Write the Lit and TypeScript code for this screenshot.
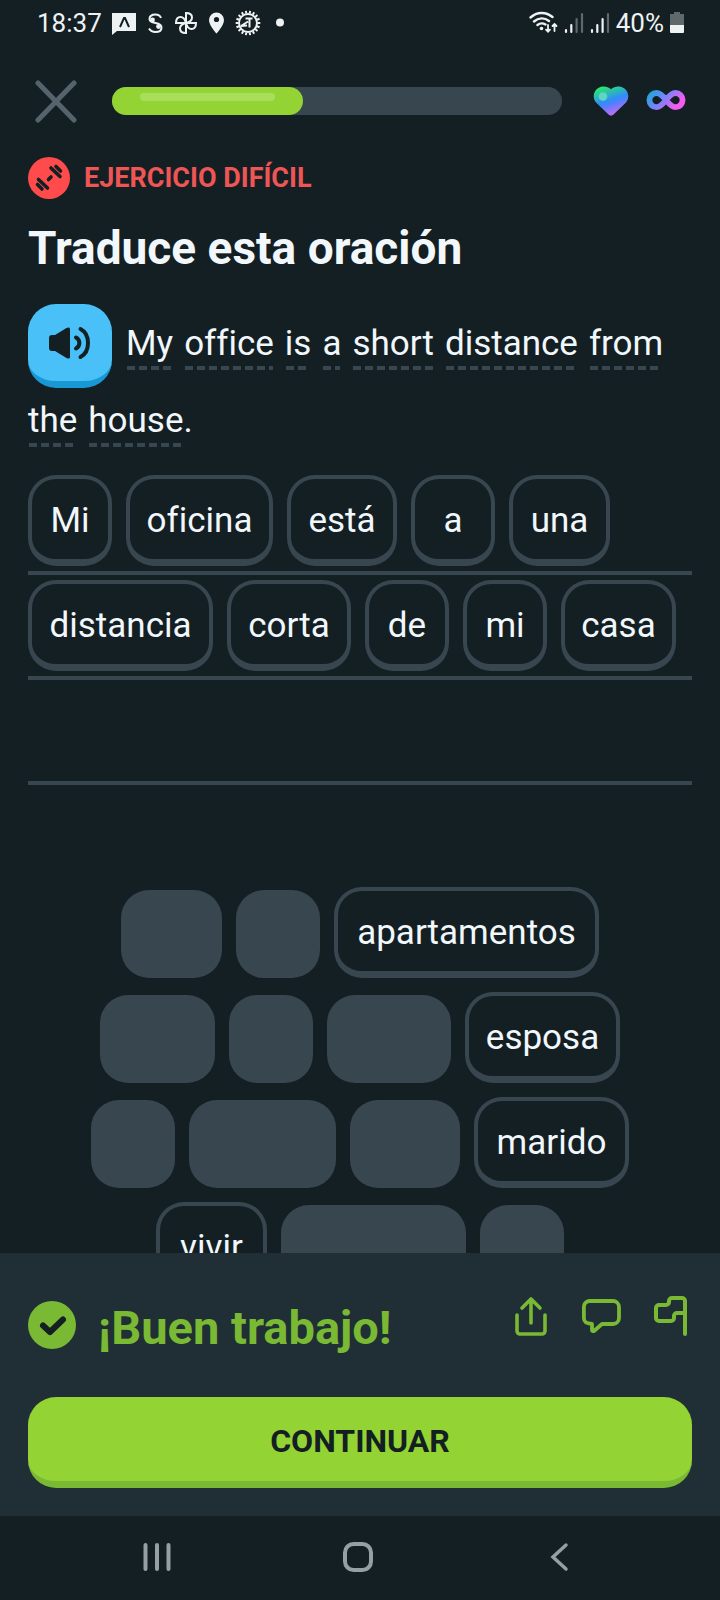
import { LitElement, html, css, svg } from "lit";
import { customElement, property } from "lit/decorators.js";

interface Word {
  text: string;
  width: number;
  used?: boolean;
}

const answerRows: Word[][] = [
  [
    { text: "Mi", width: 84 },
    { text: "oficina", width: 147 },
    { text: "está", width: 110 },
    { text: "a", width: 84 },
    { text: "una", width: 101 },
  ],
  [
    { text: "distancia", width: 185 },
    { text: "corta", width: 124 },
    { text: "de", width: 84 },
    { text: "mi", width: 84 },
    { text: "casa", width: 115 },
  ],
  [],
];

const bankRows: Word[][] = [
  [
    { text: "una", width: 101, used: true },
    { text: "a", width: 84, used: true },
    { text: "apartamentos", width: 265 },
  ],
  [
    { text: "casa", width: 115, used: true },
    { text: "de", width: 84, used: true },
    { text: "corta", width: 124, used: true },
    { text: "esposa", width: 155 },
  ],
  [
    { text: "mi", width: 84, used: true },
    { text: "oficina", width: 147, used: true },
    { text: "está", width: 110, used: true },
    { text: "marido", width: 155 },
  ],
  [
    { text: "vivir", width: 111 },
    { text: "distancia", width: 185, used: true },
    { text: "Mi", width: 84, used: true },
  ],
];

const sentence = ["My", "office", "is", "a", "short", "distance", "from", "the", "house"];

@customElement("word-chip")
export class WordChip extends LitElement {
  @property() text = "";
  @property({ type: Boolean }) used = false;

  static styles = css`
    :host {
      display: block;
    }
    .chip,
    .slot {
      box-sizing: border-box;
      width: 100%;
      border-radius: 28px;
    }
    .chip {
      display: block;
      height: 91px;
      margin: 0;
      padding: 4px 0 0;
      border: 4px solid #38464f;
      border-bottom-width: 7px;
      background: #141f23;
      color: #f1f7fb;
      font: 400 35px/42px Roboto, sans-serif;
      font-variant-ligatures: none;
      text-align: center;
      white-space: nowrap;
      cursor: pointer;
    }
    .slot {
      height: 88px;
      background: #38464f;
    }
  `;

  render() {
    return this.used
      ? html`<div class="slot"></div>`
      : html`<button class="chip" type="button">${this.text}</button>`;
  }
}

@customElement("status-bar")
export class StatusBar extends LitElement {
  static styles = css`
    :host {
      display: flex;
      justify-content: space-between;
      align-items: center;
      height: 46px;
      padding: 0 36px 0 37px;
      color: #eef2f3;
      font: 400 26px/30px Roboto, sans-serif;
    }
    .group {
      display: flex;
      align-items: center;
    }
    .left {
      gap: 10px;
    }
    .right {
      gap: 6px;
    }
    svg {
      display: block;
    }
  `;

  private teeth() {
    return Array.from({ length: 18 }, (_, i) => {
      const a = (i * Math.PI) / 9;
      const x = Math.cos(a);
      const y = Math.sin(a);
      return svg`<path d="M${13 + 9.5 * x} ${13 + 9.5 * y}L${13 + 12.3 * x} ${13 + 12.3 * y}"/>`;
    });
  }

  render() {
    return html`
      <div class="group left">
        <span>18:37</span>
        <svg width="24" height="26" viewBox="0 0 24 26">
          <path d="M0 3h24v18H5l-5 4z" fill="#eef2f3" />
          <path d="M8 17l4-9h1l4 9" fill="none" stroke="#141f23" stroke-width="2" />
        </svg>
        <svg width="18" height="26" viewBox="0 0 18 26" fill="none" stroke="#eef2f3">
          <path
            d="M15 8C14 5.500 12 4.500 9.500 4.500C6 4.500 3.500 6 3.500 9C3.500 12 6.500 12.500 9.500 13C13 13.600 15.500 14.500 15.500 17.500C15.500 20.500 13 22 9.500 22C6.500 22 4.500 21 3 18.500"
            stroke-width="2"
          />
          <circle cx="6.500" cy="10" r="2.400" fill="#eef2f3" stroke="none" />
          <circle cx="12.500" cy="16.500" r="2.400" fill="#eef2f3" stroke="none" />
        </svg>
        <svg width="24" height="26" viewBox="0 0 24 26" fill="none" stroke="#eef2f3" stroke-width="2">
          <path d="M12 13V3c4 0 6 2 6 4.500S16 12 12 13z" />
          <path d="M12 13h10c0 4-2 6-4.500 6S13 17 12 13z" />
          <path d="M12 13v10c-4 0-6-2-6-4.500S8 14 12 13z" />
          <path d="M12 13H2c0-4 2-6 4.500-6S11 9 12 13z" />
        </svg>
        <svg width="17" height="26" viewBox="0 0 17 26">
          <path
            d="M8.500 2.500a7.500 7.500 0 0 0-7.500 7.500c0 5.500 7.500 13.500 7.500 13.500S16 15.500 16 10a7.500 7.500 0 0 0-7.500-7.500z"
            fill="#eef2f3"
          />
          <circle cx="8.500" cy="9.500" r="2.600" fill="#141f23" />
        </svg>
        <svg width="26" height="26" viewBox="0 0 26 26" fill="none" stroke="#eef2f3" stroke-width="2">
          <circle cx="13" cy="13" r="9" />
          ${this.teeth()}
          <path d="M10.500 8.500h7M14.500 8.500v9M13 11.500l-7 4.500 6-.5" />
        </svg>
        <svg width="26" height="26" viewBox="0 0 26 26">
          <circle cx="9" cy="12.500" r="4" fill="#eef2f3" />
        </svg>
      </div>
      <div class="group right">
        <svg width="29" height="26" viewBox="0 0 29 26" fill="none" stroke="#eef2f3" stroke-linecap="round">
          <path d="M1.500 7.500C8 1.500 17 1.500 23.500 7M5 11.500c4.500-4 10.500-4.200 15-.5M8.500 15c2.500-2 5.500-2 8-.5" stroke-width="2.400" />
          <circle cx="12.500" cy="18.500" r="1.800" fill="#eef2f3" stroke="none" />
          <path d="M19 15v6.500M17 19.700l2 2 2-2M25.500 21v-6.500M23.500 16l2-2 2 2" stroke-width="1.800" />
        </svg>
        <svg width="20" height="26" viewBox="0 0 20 26" fill="none" stroke="#eef2f3" stroke-width="2.200" stroke-linecap="round">
          <path d="M2 20v2M7.300 15v7" />
          <path d="M12.600 9v13M18 4v18" stroke="#5f696c" />
        </svg>
        <svg width="20" height="26" viewBox="0 0 20 26" fill="none" stroke="#eef2f3" stroke-width="2.200" stroke-linecap="round">
          <path d="M2 20v2M7.300 15v7M12.600 9v13" />
          <path d="M18 4v18" stroke="#5f696c" />
        </svg>
        <span>40%</span>
        <svg width="14" height="26" viewBox="0 0 14 26">
          <path d="M4 2h6v2h4v11H0V4h4z" fill="#5f696c" />
          <path d="M0 15h14v7a1 1 0 0 1-1 1H1a1 1 0 0 1-1-1z" fill="#eef2f3" />
        </svg>
      </div>
    `;
  }
}

@customElement("app-root")
export class AppRoot extends LitElement {
  @property({ type: Number }) progress = 42.5;

  static styles = css`
    :host {
      display: flex;
      flex-direction: column;
      height: 100vh;
      overflow: hidden;
      background: #141f23;
      color: #f1f7fb;
      font-family: Roboto, sans-serif;
      font-variant-ligatures: none;
    }
    svg {
      display: block;
    }
    button {
      margin: 0;
      padding: 0;
      border: 0;
      background: none;
      font-family: inherit;
      color: inherit;
      cursor: pointer;
    }
    h1,
    h2,
    p {
      margin: 0;
    }
    .top {
      display: flex;
      align-items: center;
      flex: none;
      height: 110px;
      padding: 0 34px;
    }
    .track {
      flex: 1;
      height: 28px;
      margin: 0 30px 0 34px;
      border-radius: 14px;
      background: #38464f;
    }
    .fill {
      box-sizing: border-box;
      height: 100%;
      padding: 6px 28px;
      border-radius: 14px;
      background: #93d333;
    }
    .shine {
      height: 8px;
      border-radius: 4px;
      background: #a8de5c;
    }
    .perks {
      display: flex;
      align-items: center;
      gap: 17px;
    }
    main {
      flex: 1;
      min-height: 0;
      overflow: hidden;
      padding: 1px 28px 0;
    }
    .tag {
      display: flex;
      align-items: center;
      gap: 14px;
      color: #ee5555;
      font-size: 27px;
      line-height: 42px;
      font-weight: 700;
    }
    h1 {
      margin-top: 22px;
      font-size: 46px;
      line-height: 54px;
      font-weight: 700;
    }
    .sentence {
      display: flex;
      flex-wrap: wrap;
      align-items: center;
      gap: 11px;
      margin-top: 29px;
      font-size: 35px;
      line-height: 44px;
    }
    .speak {
      display: flex;
      align-items: center;
      justify-content: center;
      box-sizing: border-box;
      width: 84px;
      height: 84px;
      margin-right: 3px;
      border-bottom: 7px solid #1899d6;
      border-radius: 28px;
      background: #49c0f8;
    }
    .word {
      display: flex;
    }
    .hint::after {
      content: "";
      display: block;
      height: 4px;
      margin: 0 1px;
      background: repeating-linear-gradient(90deg, #38464f 0 8px, transparent 8px 12px);
    }
    .answer {
      margin-top: 28px;
    }
    .line {
      display: flex;
      gap: 14px;
      height: 96px;
      margin-bottom: 5px;
      border-bottom: 4px solid #38464f;
    }
    .bank {
      display: flex;
      flex-direction: column;
      gap: 14px;
      margin-top: 102px;
    }
    .row {
      display: flex;
      justify-content: center;
      align-items: flex-end;
      gap: 14px;
    }
    footer {
      flex: none;
      padding: 43px 28px 28px;
      background: #202f36;
    }
    .result {
      display: flex;
      justify-content: space-between;
      align-items: flex-start;
    }
    .praise {
      display: flex;
      gap: 22px;
      padding-top: 5px;
      color: #79b933;
    }
    h2 {
      font-size: 47px;
      line-height: 54px;
      font-weight: 700;
    }
    .actions {
      display: flex;
      gap: 30px;
    }
    .continue {
      box-sizing: border-box;
      display: block;
      width: 100%;
      height: 91px;
      margin-top: 42px;
      padding-top: 3px;
      border-bottom: 7px solid #79b933;
      border-radius: 28px;
      background: #93d333;
      color: #141f23;
      font-size: 32px;
      line-height: 42px;
      font-weight: 700;
    }
    nav {
      display: grid;
      grid-template-columns: repeat(3, 1fr);
      flex: none;
      height: 84px;
      padding: 0 60px 2px 56px;
      box-sizing: border-box;
    }
    nav button {
      display: flex;
      align-items: center;
      justify-content: center;
    }
  `;

  private chips(words: Word[]) {
    return words.map(
      (w) => html`<word-chip style="width:${w.width}px" .text=${w.text} .used=${!!w.used}></word-chip>`
    );
  }

  private header() {
    return html`
      <div class="top">
        <button type="button" aria-label="Cerrar">
          <svg width="44" height="44" viewBox="0 0 44 44" fill="none" stroke="#55646c" stroke-width="5" stroke-linecap="round">
            <path d="M4 4l36 37M40 4L4 41" />
          </svg>
        </button>
        <div class="track" role="progressbar" aria-valuenow=${this.progress} aria-valuemin="0" aria-valuemax="100">
          <div class="fill" style="width:${this.progress}%"><div class="shine"></div></div>
        </div>
        <div class="perks">
          <svg width="37" height="30" viewBox="0 0 37 30">
            <defs>
              <linearGradient id="heart" x1="0.200" y1="0" x2="0.600" y2="1">
                <stop offset="0.050" stop-color="#28e66e" />
                <stop offset="0.500" stop-color="#2f8dfb" />
                <stop offset="0.650" stop-color="#5b7dfb" />
                <stop offset="1" stop-color="#d06bf5" />
              </linearGradient>
            </defs>
            <path
              d="M19 3.200C22 .3 26 0 29 .8C36 3 38.500 11 34 16.500L21.500 28.500C20 30 18 30 16.500 28.500L4 16.500C-.5 11 2 3 9 .8C12 0 16 .3 19 3.200z"
              fill="url(#heart)"
            />
            <circle cx="11" cy="10.500" r="4.300" fill="#5fd6c0" />
          </svg>
          <svg width="40" height="30" viewBox="0 0 40 30">
            <defs>
              <linearGradient id="loop" x1="0" y1="0" x2="1" y2="0.400">
                <stop offset="0" stop-color="#1fa6d8" />
                <stop offset="0.450" stop-color="#6f86fb" />
                <stop offset="1" stop-color="#f25cf0" />
              </linearGradient>
            </defs>
            <path
              d="M20 14C16.500 9.500 14 7 10.500 7a7 7 0 0 0 0 14.200C14 21.200 16.500 18.500 20 14C23.500 9.500 26 7 29.500 7a7 7 0 0 1 0 14.200C26 21.200 23.500 18.500 20 14z"
              fill="none"
              stroke="url(#loop)"
              stroke-width="5.800"
            />
          </svg>
        </div>
      </div>
    `;
  }

  render() {
    return html`
      <status-bar></status-bar>
      ${this.header()}
      <main>
        <div class="tag">
          <svg width="42" height="42" viewBox="0 0 42 42">
            <circle cx="21" cy="21" r="21" fill="#ff4b4b" />
            <g fill="none" stroke="#141f23" stroke-width="3.600" stroke-linecap="round">
              <path d="M23 11l9 8.500M28 9.500l4.500 4.500M10.500 22.500l9 8.500M9.500 27.500l4.500 4.500M20.500 22.500l2.500-2.500" />
            </g>
          </svg>
          <span>EJERCICIO DIFÍCIL</span>
        </div>
        <h1>Traduce esta oración</h1>
        <div class="sentence">
          <button class="speak" type="button" aria-label="Escuchar">
            <svg width="42" height="34" viewBox="0 0 42 34">
              <path d="M0 12a3 3 0 0 1 3-3h3L17.500 2c2-1.200 3.500-.5 3.500 1v28c0 1.500-1.500 2.200-3.500 1L6 25H3a3 3 0 0 1-3-3z" fill="#141f23" />
              <path d="M27 11.500c4.500 2.500 4.500 8.500 0 11M31.500 3c10 5.200 10 22.800 0 28" fill="none" stroke="#141f23" stroke-width="4" stroke-linecap="round" />
            </svg>
          </button>
          ${sentence.map(
            (w, i) => html`<span class="word"><span class="hint">${w}</span>${i === sentence.length - 1 ? "." : ""}</span>`
          )}
        </div>
        <div class="answer">
          ${answerRows.map((r) => html`<div class="line">${this.chips(r)}</div>`)}
        </div>
        <div class="bank">
          ${bankRows.map((r) => html`<div class="row">${this.chips(r)}</div>`)}
        </div>
      </main>
      <footer>
        <div class="result">
          <div class="praise">
            <svg width="48" height="48" viewBox="0 0 48 48">
              <circle cx="24" cy="24" r="24" fill="#79b933" />
              <path d="M15 24.500l7 6.500 13-12.500" fill="none" stroke="#141f23" stroke-width="6" stroke-linecap="round" stroke-linejoin="round" />
            </svg>
            <h2>¡Buen trabajo!</h2>
          </div>
          <div class="actions">
            <button type="button" aria-label="Compartir">
              <svg width="40" height="42" viewBox="0 0 40 42" fill="none" stroke="#79b933" stroke-width="3.600" stroke-linecap="round" stroke-linejoin="round">
                <path d="M5 19v16a3 3 0 0 0 3 3h22a3 3 0 0 0 3-3V19M19 27V4M10 12l9-9 9 9" />
              </svg>
            </button>
            <button type="button" aria-label="Comentar">
              <svg width="40" height="42" viewBox="0 0 40 42" fill="none" stroke="#79b933" stroke-width="3.800" stroke-linecap="round" stroke-linejoin="round">
                <path d="M7 5h24a6 6 0 0 1 6 6v11a6 6 0 0 1-6 6H20l-8 7c-1 .5-2 0-2-1v-6C4 27.500 1.900 26 1.900 22V11A6 6 0 0 1 7 5z" />
              </svg>
            </button>
            <button type="button" aria-label="Reportar">
              <svg width="40" height="42" viewBox="0 0 40 42" fill="none" stroke="#79b933" stroke-width="4" stroke-linecap="round" stroke-linejoin="round">
                <path d="M33 38V5a3 3 0 0 0-3-3H20a3 3 0 0 0-3 3v1a3 3 0 0 1-3 3H7a3 3 0 0 0-3 3v10a3 3 0 0 0 3 3h12a3 3 0 0 0 3-3v-2a3 3 0 0 1 3-3h8" />
              </svg>
            </button>
          </div>
        </div>
        <button class="continue" type="button">CONTINUAR</button>
      </footer>
      <nav>
        <button type="button" aria-label="Recientes">
          <svg width="30" height="30" viewBox="0 0 30 30" fill="none" stroke="#969fa2" stroke-width="4" stroke-linecap="round">
            <path d="M3.500 3v24M15 3v24M26.500 3v24" />
          </svg>
        </button>
        <button type="button" aria-label="Inicio">
          <svg width="30" height="30" viewBox="0 0 30 30" fill="none" stroke="#969fa2" stroke-width="4">
            <rect x="2" y="2" width="26" height="26" rx="8.500" />
          </svg>
        </button>
        <button type="button" aria-label="Atrás">
          <svg width="30" height="30" viewBox="0 0 30 30" fill="none" stroke="#969fa2" stroke-width="3.500" stroke-linecap="round">
            <path d="M22 3L9 15l13 12" />
          </svg>
        </button>
      </nav>
    `;
  }
}
